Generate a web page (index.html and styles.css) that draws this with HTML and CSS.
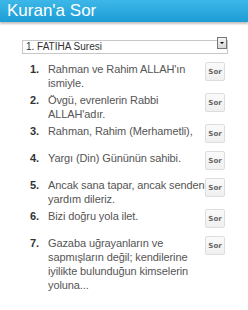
FILE: index.html
```html
<!DOCTYPE html>
<html lang="tr">

<head>
    <meta charset="UTF-8">
    <title>Kuran'a Sor</title>
    <link rel="stylesheet" href="styles.css">
</head>

<body>

    <div class="header">Kuran'a Sor</div>

    <div class="picker">
        <select class="sure-select">
            <option>1. FATİHA Suresi</option>
        </select>
        <span class="drop-btn"><span class="drop-mark"></span></span>
    </div>

    <!-- Ayet listesi -->
    <div class="ayet-list">
        <div class="ayet">
            <span class="num">1.</span>
            <span class="text">Rahman ve Rahim ALLAH'ın ismiyle.</span>
            <button class="sor">Sor</button>
        </div>
        <div class="ayet">
            <span class="num">2.</span>
            <span class="text">Övgü, evrenlerin Rabbi ALLAH'adır.</span>
            <button class="sor">Sor</button>
        </div>
        <div class="ayet">
            <span class="num">3.</span>
            <span class="text">Rahman, Rahim (Merhametli),</span>
            <button class="sor">Sor</button>
        </div>
        <div class="ayet">
            <span class="num">4.</span>
            <span class="text">Yargı (Din) Gününün sahibi.</span>
            <button class="sor">Sor</button>
        </div>
        <div class="ayet">
            <span class="num">5.</span>
            <span class="text">Ancak sana tapar, ancak senden yardım dileriz.</span>
            <button class="sor">Sor</button>
        </div>
        <div class="ayet">
            <span class="num">6.</span>
            <span class="text">Bizi doğru yola ilet.</span>
            <button class="sor">Sor</button>
        </div>
        <div class="ayet">
            <span class="num">7.</span>
            <span class="text">Gazaba uğrayanların ve sapmışların değil; kendilerine iyilikte bulunduğun kimselerin yoluna...</span>
            <button class="sor">Sor</button>
        </div>
    </div>

</body>

</html>
```

FILE: styles.css
```css
body {
    margin: 0;
    font-family: 'Liberation Sans', Arial, sans-serif;
    background-color: #fff;
    color: #444;
}

.header {
    height: 22px;
    line-height: 22px;
    padding-left: 7px;
    font-size: 17px;
    color: #fff;
    background: linear-gradient(#3db7e8, #1d9dd6);
    box-shadow: 0 2px 2px rgba(0, 0, 0, 0.25);
}

.picker {
    position: relative;
    margin: 14px 20px 0 22px;
    height: 14px;
}

.sure-select {
    appearance: none;
    -webkit-appearance: none;
    width: 100%;
    height: 14px;
    margin: 0;
    padding: 0 0 0 3px;
    border: 1px solid #c8c8c8;
    border-radius: 0;
    background-color: #fff;
    font-family: 'Liberation Sans', Arial, sans-serif;
    font-size: 10px;
    color: #333;
    box-sizing: border-box;
}

.drop-btn {
    position: absolute;
    top: 1px;
    right: 1px;
    width: 10px;
    height: 12px;
    box-sizing: border-box;
    border: 1px solid #777;
    background: linear-gradient(#f4f4f4, #d8d8d8);
    display: flex;
    align-items: center;
    justify-content: center;
}

.drop-mark {
    width: 0;
    height: 0;
    border-left: 2px solid transparent;
    border-right: 2px solid transparent;
    border-top: 2px solid #000;
}

.ayet-list {
    margin-top: 12px;
    padding: 0 23px 0 30px;
}

.ayet {
    display: flex;
    align-items: flex-start;
    padding-bottom: 3px;
}

.num {
    width: 18px;
    flex-shrink: 0;
    font-size: 11px;
    line-height: 14px;
    font-weight: bold;
    color: #333;
}

.text {
    flex: 1;
    font-size: 11px;
    line-height: 14px;
    color: #555;
    letter-spacing: -0.1px;
}

.sor {
    width: 20px;
    height: 19px;
    margin: 0 0 5px 0;
    padding: 0;
    flex-shrink: 0;
    border: 1px solid #ddd;
    border-radius: 2px;
    background: linear-gradient(#fafafa, #f0f0f0);
    font-family: 'DejaVu Sans', sans-serif;
    font-size: 7px;
    font-weight: bold;
    color: #666;
}
```
